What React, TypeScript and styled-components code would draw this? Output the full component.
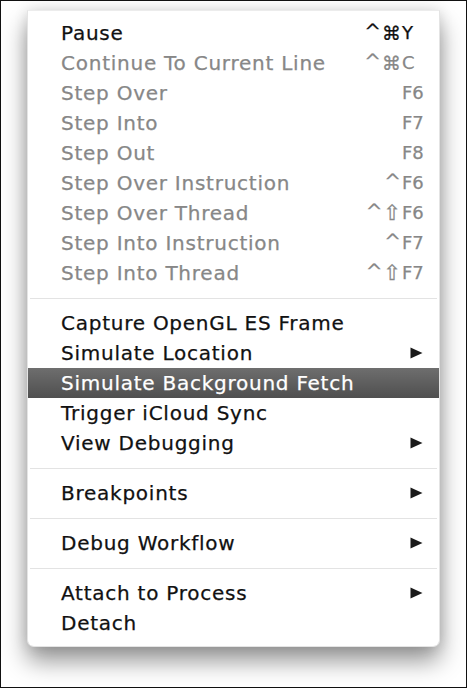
import styled, { createGlobalStyle } from 'styled-components'

const Global = createGlobalStyle`
  html, body {
    margin: 0;
    padding: 0;
    background: #fff;
  }
  * {
    box-sizing: border-box;
  }
`

const Frame = styled.div`
  width: 467px;
  height: 688px;
  border: 1.5px solid #111;
  background: #fff;
  padding: 9px 0 0 26px;
  font-family: 'DejaVu Sans', 'Liberation Sans', sans-serif;
`

const Menu = styled.div`
  width: 413px;
  padding: 7px 0 8px;
  background: #fff;
  border: 1px solid #e4e4e4;
  border-top-color: #ececec;
  border-radius: 0 0 7px 7px;
  box-shadow: 0 14px 24px rgba(0, 0, 0, 0.42), 0 0 14px rgba(0, 0, 0, 0.12);
`

const Row = styled.div<{ $disabled?: boolean; $active?: boolean }>`
  display: grid;
  grid-template-columns: 1fr auto 21px;
  align-items: center;
  height: 30px;
  padding: 0 16px 0 33px;
  font-size: 20px;
  letter-spacing: 0.75px;
  line-height: 30px;
  -webkit-text-stroke: 0.25px currentColor;
  color: ${(p) => (p.$active ? '#fff' : p.$disabled ? '#878787' : '#111')};
  background: ${(p) => (p.$active ? 'linear-gradient(#6e6e6e, #4f4f4f)' : 'transparent')};
  white-space: nowrap;
`

const Label = styled.span``

const Mods = styled.span`
  display: flex;
  align-items: center;
  justify-content: flex-end;
  gap: 1px;
  font-size: 18px;
  letter-spacing: 0;
  padding-right: 1px;
`

const Caret = styled.span`
  font-size: 20px;
  position: relative;
  top: -2px;
`

const Glyph = styled.span<{ $size?: number }>`
  font-size: ${(p) => p.$size ?? 18}px;
`

const Key = styled.span<{ $sub?: boolean }>`
  font-size: 18px;
  letter-spacing: 0;
  display: flex;
  justify-content: ${(p) => (p.$sub ? 'flex-end' : 'flex-start')};
  align-items: center;
`

const Separator = styled.div`
  height: 20px;
  display: flex;
  align-items: center;
  padding: 0 2px;
  &::after {
    content: '';
    flex: 1;
    height: 1px;
    background: #e3e3e3;
  }
`

const Arrow = () => (
  <svg width="13" height="12" viewBox="0 0 13 12">
    <path d="M0.5 0.5 L12.5 6 L0.5 11.5 Z" fill="#1a1a1a" />
  </svg>
)

type Item = {
  label: string
  mods?: string
  keyName?: string
  disabled?: boolean
  active?: boolean
  sub?: boolean
}

const groups: Item[][] = [
  [
    { label: 'Pause', mods: '^⌘', keyName: 'Y' },
    { label: 'Continue To Current Line', mods: '^⌘', keyName: 'C', disabled: true },
    { label: 'Step Over', keyName: 'F6', disabled: true },
    { label: 'Step Into', keyName: 'F7', disabled: true },
    { label: 'Step Out', keyName: 'F8', disabled: true },
    { label: 'Step Over Instruction', mods: '^', keyName: 'F6', disabled: true },
    { label: 'Step Over Thread', mods: '^⇧', keyName: 'F6', disabled: true },
    { label: 'Step Into Instruction', mods: '^', keyName: 'F7', disabled: true },
    { label: 'Step Into Thread', mods: '^⇧', keyName: 'F7', disabled: true },
  ],
  [
    { label: 'Capture OpenGL ES Frame' },
    { label: 'Simulate Location', sub: true },
    { label: 'Simulate Background Fetch', active: true },
    { label: 'Trigger iCloud Sync' },
    { label: 'View Debugging', sub: true },
  ],
  [{ label: 'Breakpoints', sub: true }],
  [{ label: 'Debug Workflow', sub: true }],
  [{ label: 'Attach to Process', sub: true }, { label: 'Detach' }],
]

const renderMods = (mods: string) =>
  mods.split('').map((m, i) =>
    m === '^' ? (
      <Caret key={i}>^</Caret>
    ) : (
      <Glyph key={i} $size={m === '⇧' ? 21 : 19}>
        {m}
      </Glyph>
    )
  )

export default function App() {
  return (
    <>
      <Global />
      <Frame>
        <Menu>
          {groups.map((items, gi) => (
            <div key={gi}>
              {gi > 0 && <Separator />}
              {items.map((it) => (
                <Row key={it.label} $disabled={it.disabled} $active={it.active}>
                  <Label>{it.label}</Label>
                  <Mods>{it.mods ? renderMods(it.mods) : null}</Mods>
                  <Key $sub={it.sub}>{it.sub ? <Arrow /> : it.keyName}</Key>
                </Row>
              ))}
            </div>
          ))}
        </Menu>
      </Frame>
    </>
  )
}
